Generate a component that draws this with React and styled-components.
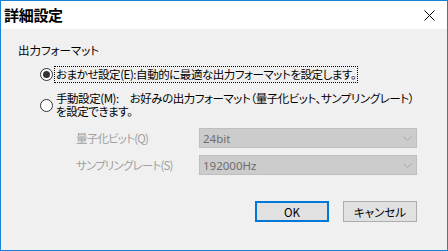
import React from "react";
import styled, { createGlobalStyle } from "styled-components";

const Global = createGlobalStyle`
  html, body { margin: 0; padding: 0; background: #f0f0f0; }
  body { font-family: "Noto Sans CJK JP", "Noto Sans", sans-serif; }
`;

const Window = styled.div`
  width: 448px;
  height: 251px;
  box-sizing: border-box;
  border: 1px solid #1883d7;
  display: flex;
  flex-direction: column;
  background: #f0f0f0;
  color: #000;
  font-family: "Noto Sans CJK JP", "Noto Sans", sans-serif;
  font-size: 12px;
`;

const TitleBar = styled.div`
  height: 28px;
  flex: none;
  background: #fff;
  display: flex;
  align-items: center;
  justify-content: space-between;
  padding: 0 12px 0 3px;
`;

const Title = styled.div`
  font-size: 15px;
  font-weight: 700;
  line-height: 18px;
  letter-spacing: -0.3px;
`;

const Body = styled.div`
  flex: 1;
  padding: 13px 30px 0 17px;
  display: flex;
  flex-direction: column;
`;

const GroupLabel = styled.div`
  line-height: 16px;
  height: 16px;
  font-size: 11.5px;
  font-feature-settings: "palt";
`;

const Options = styled.div`
  margin-left: 22px;
  display: flex;
  flex-direction: column;
`;

const RadioRow = styled.div`
  display: flex;
  align-items: center;
  margin-top: ${(p) => p.$mt}px;
`;

const RadioCircle = styled.span`
  width: 13px;
  height: 13px;
  box-sizing: border-box;
  border-radius: 50%;
  border: 1px solid #333;
  background: #fff;
  flex: none;
  display: flex;
  align-items: center;
  justify-content: center;
  &::after {
    content: "";
    width: 7px;
    height: 7px;
    border-radius: 50%;
    background: ${(p) => (p.$checked ? "#333" : "transparent")};
  }
`;

const RadioText = styled.span`
  margin-left: 1px;
  padding: 0 1px;
  border: 1px dotted ${(p) => (p.$focus ? "#000" : "transparent")};
  line-height: ${(p) => p.$lh}px;
  font-size: 11.5px;
  font-feature-settings: "palt";
  letter-spacing: -0.45px;
  white-space: nowrap;
`;

const ComboRow = styled.div`
  display: flex;
  align-items: center;
  height: 20px;
  margin-top: ${(p) => p.$mt}px;
  margin-left: 58px;
`;

const ComboLabel = styled.span`
  width: 123px;
  color: #a0a0a0;
  font-size: 11.5px;
  font-feature-settings: "palt";
  letter-spacing: -0.8px;
  white-space: nowrap;
`;

const Combo = styled.div`
  width: 218px;
  height: 20px;
  box-sizing: border-box;
  background: #cccccc;
  border: 1px solid #bfbfbf;
  display: flex;
  align-items: center;
  justify-content: space-between;
  padding: 0 4px 0 3px;
  color: #6d6d6d;
  font-family: "Noto Sans", "Noto Sans CJK JP", sans-serif;
  font-size: 11.5px;
`;

const ButtonRow = styled.div`
  display: flex;
  justify-content: flex-end;
  gap: 14px;
  margin-top: 26px;
`;

const Button = styled.div`
  width: 74px;
  height: 21px;
  box-sizing: border-box;
  background: #e1e1e1;
  border: ${(p) => (p.$default ? "2px solid #0078d7" : "1px solid #adadad")};
  display: flex;
  align-items: center;
  justify-content: center;
  font-size: 11.5px;
  font-feature-settings: "palt";
`;

const Chevron = () => (
  <svg width="9" height="5" viewBox="0 0 9 5">
    <path d="M0.5 0.5 L4.5 4.5 L8.5 0.5" fill="none" stroke="#a8a8a8" strokeWidth="1" />
  </svg>
);

const CloseIcon = () => (
  <svg width="11" height="11" viewBox="0 0 11 11">
    <path d="M0.5 0.5 L10.5 10.5 M10.5 0.5 L0.5 10.5" stroke="#000" strokeWidth="1" />
  </svg>
);

export default function App() {
  return (
    <>
      <Global />
      <Window>
        <TitleBar>
          <Title>詳細設定</Title>
          <CloseIcon />
        </TitleBar>
        <Body>
          <GroupLabel>出力フォーマット</GroupLabel>
          <Options>
            <RadioRow $mt={8}>
              <RadioCircle $checked />
              <RadioText $focus $lh={15}>
                おまかせ設定(E):自動的に最適な出力フォーマットを設定します。
              </RadioText>
            </RadioRow>
            <RadioRow $mt={8}>
              <RadioCircle />
              <RadioText $lh={13}>
                手動設定(M):　お好みの出力フォーマット（量子化ビット、サンプリングレート）
                <br />
                を設定できます。
              </RadioText>
            </RadioRow>
          </Options>
          <ComboRow $mt={9}>
            <ComboLabel>量子化ビット(Q)</ComboLabel>
            <Combo>
              24bit
              <Chevron />
            </Combo>
          </ComboRow>
          <ComboRow $mt={7}>
            <ComboLabel>サンプリングレート(S)</ComboLabel>
            <Combo>
              192000Hz
              <Chevron />
            </Combo>
          </ComboRow>
          <ButtonRow>
            <Button $default>OK</Button>
            <Button>キャンセル</Button>
          </ButtonRow>
        </Body>
      </Window>
    </>
  );
}
